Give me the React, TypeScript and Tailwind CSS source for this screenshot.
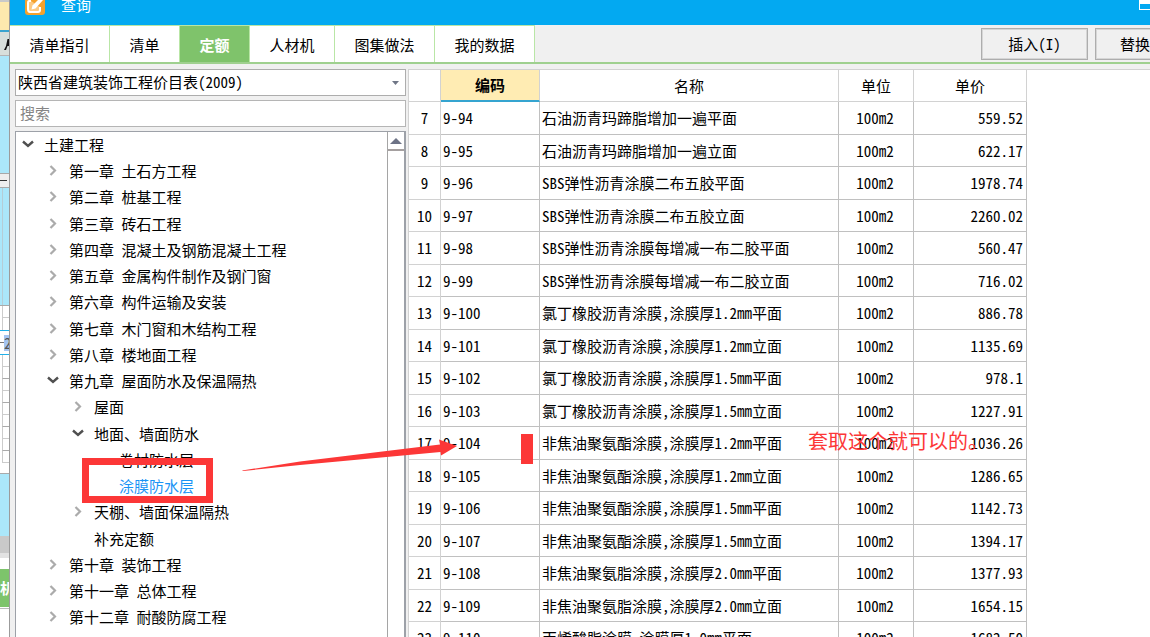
import React from "react";

type TreeNode = { label: string; level: number; state?: "open" | "closed"; active?: boolean };

const tree: TreeNode[] = [
  { label: "土建工程", level: 0, state: "open" },
  { label: "第一章 土石方工程", level: 1, state: "closed" },
  { label: "第二章 桩基工程", level: 1, state: "closed" },
  { label: "第三章 砖石工程", level: 1, state: "closed" },
  { label: "第四章 混凝土及钢筋混凝土工程", level: 1, state: "closed" },
  { label: "第五章 金属构件制作及钢门窗", level: 1, state: "closed" },
  { label: "第六章 构件运输及安装", level: 1, state: "closed" },
  { label: "第七章 木门窗和木结构工程", level: 1, state: "closed" },
  { label: "第八章 楼地面工程", level: 1, state: "closed" },
  { label: "第九章 屋面防水及保温隔热", level: 1, state: "open" },
  { label: "屋面", level: 2, state: "closed" },
  { label: "地面、墙面防水", level: 2, state: "open" },
  { label: "卷材防水层", level: 3 },
  { label: "涂膜防水层", level: 3, active: true },
  { label: "天棚、墙面保温隔热", level: 2, state: "closed" },
  { label: "补充定额", level: 2 },
  { label: "第十章 装饰工程", level: 1, state: "closed" },
  { label: "第十一章 总体工程", level: 1, state: "closed" },
  { label: "第十二章 耐酸防腐工程", level: 1, state: "closed" },
];

const indents = ["pl-[5px]", "pl-[30px]", "pl-[55px]", "pl-[80px]"];

const rows: [number, string, string, string][] = [
  [7, "9-94", "石油沥青玛蹄脂增加一遍平面", "559.52"],
  [8, "9-95", "石油沥青玛蹄脂增加一遍立面", "622.17"],
  [9, "9-96", "SBS弹性沥青涂膜二布五胶平面", "1978.74"],
  [10, "9-97", "SBS弹性沥青涂膜二布五胶立面", "2260.02"],
  [11, "9-98", "SBS弹性沥青涂膜每增减一布二胶平面", "560.47"],
  [12, "9-99", "SBS弹性沥青涂膜每增减一布二胶立面", "716.02"],
  [13, "9-100", "氯丁橡胶沥青涂膜,涂膜厚1.2mm平面", "886.78"],
  [14, "9-101", "氯丁橡胶沥青涂膜,涂膜厚1.2mm立面", "1135.69"],
  [15, "9-102", "氯丁橡胶沥青涂膜,涂膜厚1.5mm平面", "978.1"],
  [16, "9-103", "氯丁橡胶沥青涂膜,涂膜厚1.5mm立面", "1227.91"],
  [17, "9-104", "非焦油聚氨酯涂膜,涂膜厚1.2mm平面", "1036.26"],
  [18, "9-105", "非焦油聚氨酯涂膜,涂膜厚1.2mm立面", "1286.65"],
  [19, "9-106", "非焦油聚氨酯涂膜,涂膜厚1.5mm平面", "1142.73"],
  [20, "9-107", "非焦油聚氨酯涂膜,涂膜厚1.5mm立面", "1394.17"],
  [21, "9-108", "非焦油聚氨脂涂膜,涂膜厚2.0mm平面", "1377.93"],
  [22, "9-109", "非焦油聚氨脂涂膜,涂膜厚2.0mm立面", "1654.15"],
  [23, "9-110", "丙烯酸脂涂膜,涂膜厚1.0mm平面", "1682.50"],
];

const tabs = [
  { label: "清单指引", width: "w-[100px]" },
  { label: "清单", width: "w-[70px]" },
  { label: "定额", width: "w-[70px]", active: true },
  { label: "人材机", width: "w-[85px]" },
  { label: "图集做法", width: "w-[100px]" },
  { label: "我的数据", width: "w-[100px]" },
];

function Chevron({ state }: { state: "open" | "closed" }) {
  return state === "open" ? (
    <svg className="h-3 w-4" viewBox="0 0 16 12" fill="none" stroke="#505050" strokeWidth="2.4" aria-hidden="true">
      <path d="M2 2.500 L7 7 L12 2.500" />
    </svg>
  ) : (
    <svg className="h-3 w-4" viewBox="0 0 16 12" fill="none" stroke="#ababab" strokeWidth="2.2" aria-hidden="true">
      <path d="M4.500 1 L9 5.500 L4.500 10" />
    </svg>
  );
}

function BackWindow() {
  return (
    <aside className="flex h-full w-[10px] shrink-0 flex-col overflow-hidden border-r border-[#9b9b9b] bg-white">
      <div className="h-[30px] shrink-0 border-t-2 border-[#c9c9c9] bg-[#fde9ae]" />
      <div className="h-[2px] shrink-0 bg-[#3ba4cf]" />
      <div className="flex h-[24px] shrink-0 items-center justify-end overflow-hidden border-b border-[#b5b5b5] bg-[#d8dfdb]">
        <svg className="h-3 w-[5px]" viewBox="0 0 5 12" aria-hidden="true">
          <path d="M5 1H3.500L2 8L0 12H2L3.500 8H5Z" fill="#111" />
        </svg>
      </div>
      <div className="h-[117px] shrink-0 bg-[#abe7fa]" />
      <div className="flex h-[15px] shrink-0 items-center border-y border-[#a8a8a8] bg-[#eeeeee]">
        <div className="h-px w-[7px] bg-[#333]" />
      </div>
      <div className="h-[118px] shrink-0 border-b border-[#aaa] bg-[#abe7fa] pl-[2px]">
        <div className="h-full w-px bg-[#b5cdd6]" />
      </div>
      <div className="h-[24px] shrink-0 pl-[2px]">
        <div className="h-3 border-b border-l border-[#ccc]" />
        <div className="h-3 border-l border-[#ccc]" />
      </div>
      <div className="flex h-[25px] shrink-0 items-center border-y border-[#21b0e8] text-[15px] leading-4 text-[#555]">
        <span className="h-px w-1 shrink-0 bg-[#777]" />
        <span className="bg-[#a5c5f2]">2</span>
      </div>
      <div className="h-[107px] shrink-0 pl-[2px]">
        {[0, 1, 2, 3, 4, 5, 6, 7, 8].map((n) => (
          <div key={n} className="h-3 border-b border-l border-[#ccc] even:border-b-[#aaa]" />
        ))}
      </div>
      <div className="mt-[11px] h-[63px] shrink-0 border-t border-[#aaa] bg-[#abe7fa]" />
      <div className="h-[17px] shrink-0 bg-[#c9c9c9]" />
      <div className="h-[5px] shrink-0 bg-[#e2e2e2]" />
      <div className="mt-[11px] flex h-[38px] shrink-0 items-center overflow-hidden bg-[#7dc46b] text-[15px] font-bold text-white">
        <span>机</span>
      </div>
      <div className="mt-px h-px shrink-0 bg-[#bbb]" />
    </aside>
  );
}

function Annotations() {
  return (
    <div className="pointer-events-none absolute inset-0 text-[#fc3737]">
      <div className="absolute left-[82px] top-[458px] h-[45px] w-[131px] border-[7px] border-[#fc3737]" />
      <svg className="absolute left-[242px] top-[436px] h-[36px] w-[216px]" viewBox="242 436 216 36" aria-hidden="true">
        <path d="M242 470.500 L300 461.500 L440 444.500 L439 439.500 L457 446 L441 455.500 L440.500 452 L300 465 L243 471 Z" fill="#fc3737" />
      </svg>
      <div className="absolute left-[521px] top-[434px] h-[30px] w-3 bg-[#fc3737]" />
      <p className="absolute left-[808px] top-[427px] whitespace-nowrap text-[20px] leading-7">套取这个就可以的。</p>
    </div>
  );
}

export default function App() {
  return (
    <div className="relative flex h-screen overflow-hidden bg-[#f0f0f0] font-['Noto_Sans_Mono_CJK_SC','Noto_Sans_CJK_SC','Liberation_Mono',monospace] text-[15px] leading-5 text-black">
      <BackWindow />
      <main className="flex min-w-0 flex-1 flex-col overflow-hidden">
        <header className="relative flex h-[25px] shrink-0 items-start bg-[#03a9f1] pl-[15px]">
          <svg className="h-4 w-[21px]" viewBox="0 0 21 16" aria-hidden="true">
            <path d="M0 0H20V12Q20 15 17 15H3Q0 15 0 12Z" fill="#f5a12c" />
            <path d="M6 1H4Q3 1 3 3V9Q3 12 5 12H13Q15 12 15 10V7" fill="#fbc983" stroke="#fff" strokeWidth="2" />
            <path d="M6.500 9.500L7.500 5.500L13 0H18L10.500 8.500Z" fill="#fff" />
          </svg>
          <h1 className="-mt-[5px] pl-[15px] text-white">查询</h1>
          <div className="absolute -right-2 -top-1 h-[14px] w-[19px] border border-t-8 border-white" />
        </header>

        <nav className="flex h-[39px] shrink-0 border-b-2 border-[#9fd08f]">
          <div className="flex border-t border-[#b9e6a6]">
            {tabs.map((tab) => (
              <button
                key={tab.label}
                type="button"
                className={
                  tab.width +
                  " shrink-0 border-r border-[#b9e6a6] pt-[2px] " +
                  (tab.active ? "bg-[#7fc36b] font-bold text-white" : "bg-white")
                }
              >
                {tab.label}
              </button>
            ))}
          </div>
          <div className="-mr-[52px] ml-auto flex gap-[7px] pt-[3px]">
            <button type="button" className="h-8 w-[107px] border border-[#adadad] shadow-[inset_0_0_0_1px_#d6d6d6]">
              插入(I)
            </button>
            <button
              type="button"
              className="h-8 w-[107px] border border-[#adadad] pl-6 text-left shadow-[inset_0_0_0_1px_#d6d6d6]"
            >
              替换
            </button>
          </div>
        </nav>

        <div className="flex min-h-0 flex-1 pt-[5px]">
          <section className="flex w-[398px] shrink-0 flex-col gap-1 pl-[5px] pr-[2px]">
            <div className="relative h-[27px] shrink-0">
              <select
                aria-label="陕西省建筑装饰工程价目表(2009)"
                className="block h-full w-full appearance-none border border-[#adadad] bg-white px-[2px] pb-[2px]"
              >
                <option>陕西省建筑装饰工程价目表(2009)</option>
              </select>
              <svg className="absolute right-[7px] top-3 h-1 w-[7px]" viewBox="0 0 7 4" aria-hidden="true">
                <path d="M0 0H7L3.500 4Z" fill="#6f7686" />
              </svg>
            </div>
            <input
              type="text"
              aria-label="搜索"
              placeholder="搜索"
              className="h-[27px] shrink-0 border border-[#b5b5b5] bg-white px-1 pb-[2px] placeholder:text-[#858585]"
            />
            <div className="flex min-h-0 flex-1 border border-b-0 border-r-2 border-[#9da1a8] bg-white">
              <ul className="min-w-0 flex-1 overflow-hidden">
                {tree.map((node) => (
                  <li
                    key={node.label}
                    className={"flex h-[26px] items-center whitespace-pre nth-[4n]:h-[27px] " + indents[node.level]}
                  >
                    <span className="w-[23px] shrink-0">{node.state && <Chevron state={node.state} />}</span>
                    <span className={node.active ? "text-[#1a94f5]" : ""}>{node.label}</span>
                  </li>
                ))}
              </ul>
              <div className="w-[17px] shrink-0 border-l border-[#a5a5a5]">
                <div className="flex h-[19px] items-center justify-center border-b-2 border-[#a5a0a0]">
                  <svg className="h-[6px] w-3" viewBox="0 0 12 6" aria-hidden="true">
                    <path d="M0 6H12L6 0Z" fill="#6d7386" />
                  </svg>
                </div>
              </div>
            </div>
          </section>

          <section className="min-w-0 flex-1 overflow-hidden border-l border-t border-[#d2d2d2] bg-white">
            <table className="w-[618px] table-fixed border-separate border-spacing-0">
              <colgroup>
                <col className="w-8" />
                <col className="w-[99px]" />
                <col className="w-[299px]" />
                <col className="w-[75px]" />
                <col className="w-[113px]" />
              </colgroup>
              <thead>
                <tr className="h-8">
                  <th className="border-b border-r border-[#d2d2d2] p-0" />
                  <th className="border-b-2 border-r border-b-[#35a4d0] border-r-[#d2d2d2] bg-[#ffecb3] p-0 font-bold">编码</th>
                  <th className="border-b border-r border-[#d2d2d2] p-0 font-normal">名称</th>
                  <th className="border-b border-r border-[#d2d2d2] p-0 font-normal">单位</th>
                  <th className="border-b border-r border-[#d2d2d2] p-0 font-normal">单价</th>
                </tr>
              </thead>
              <tbody>
                {rows.map(([index, code, name, price]) => (
                  <tr key={code} className="h-8 odd:h-[33px]">
                    <td className="border-b border-r border-[#d2d2d2] p-0 text-center">{index}</td>
                    <td className="border-b border-r border-[#c0c0c0] py-0 pl-[2px] pr-0">{code}</td>
                    <td className="whitespace-nowrap border-b border-r border-[#c0c0c0] py-0 pl-[2px] pr-0">{name}</td>
                    <td className="border-b border-r border-[#c0c0c0] p-0 pr-[2px] text-center">100m2</td>
                    <td className="border-b border-r border-[#c0c0c0] py-0 pl-0 pr-[3px] text-right">{price}</td>
                  </tr>
                ))}
              </tbody>
            </table>
          </section>
        </div>
      </main>
      <Annotations />
    </div>
  );
}
